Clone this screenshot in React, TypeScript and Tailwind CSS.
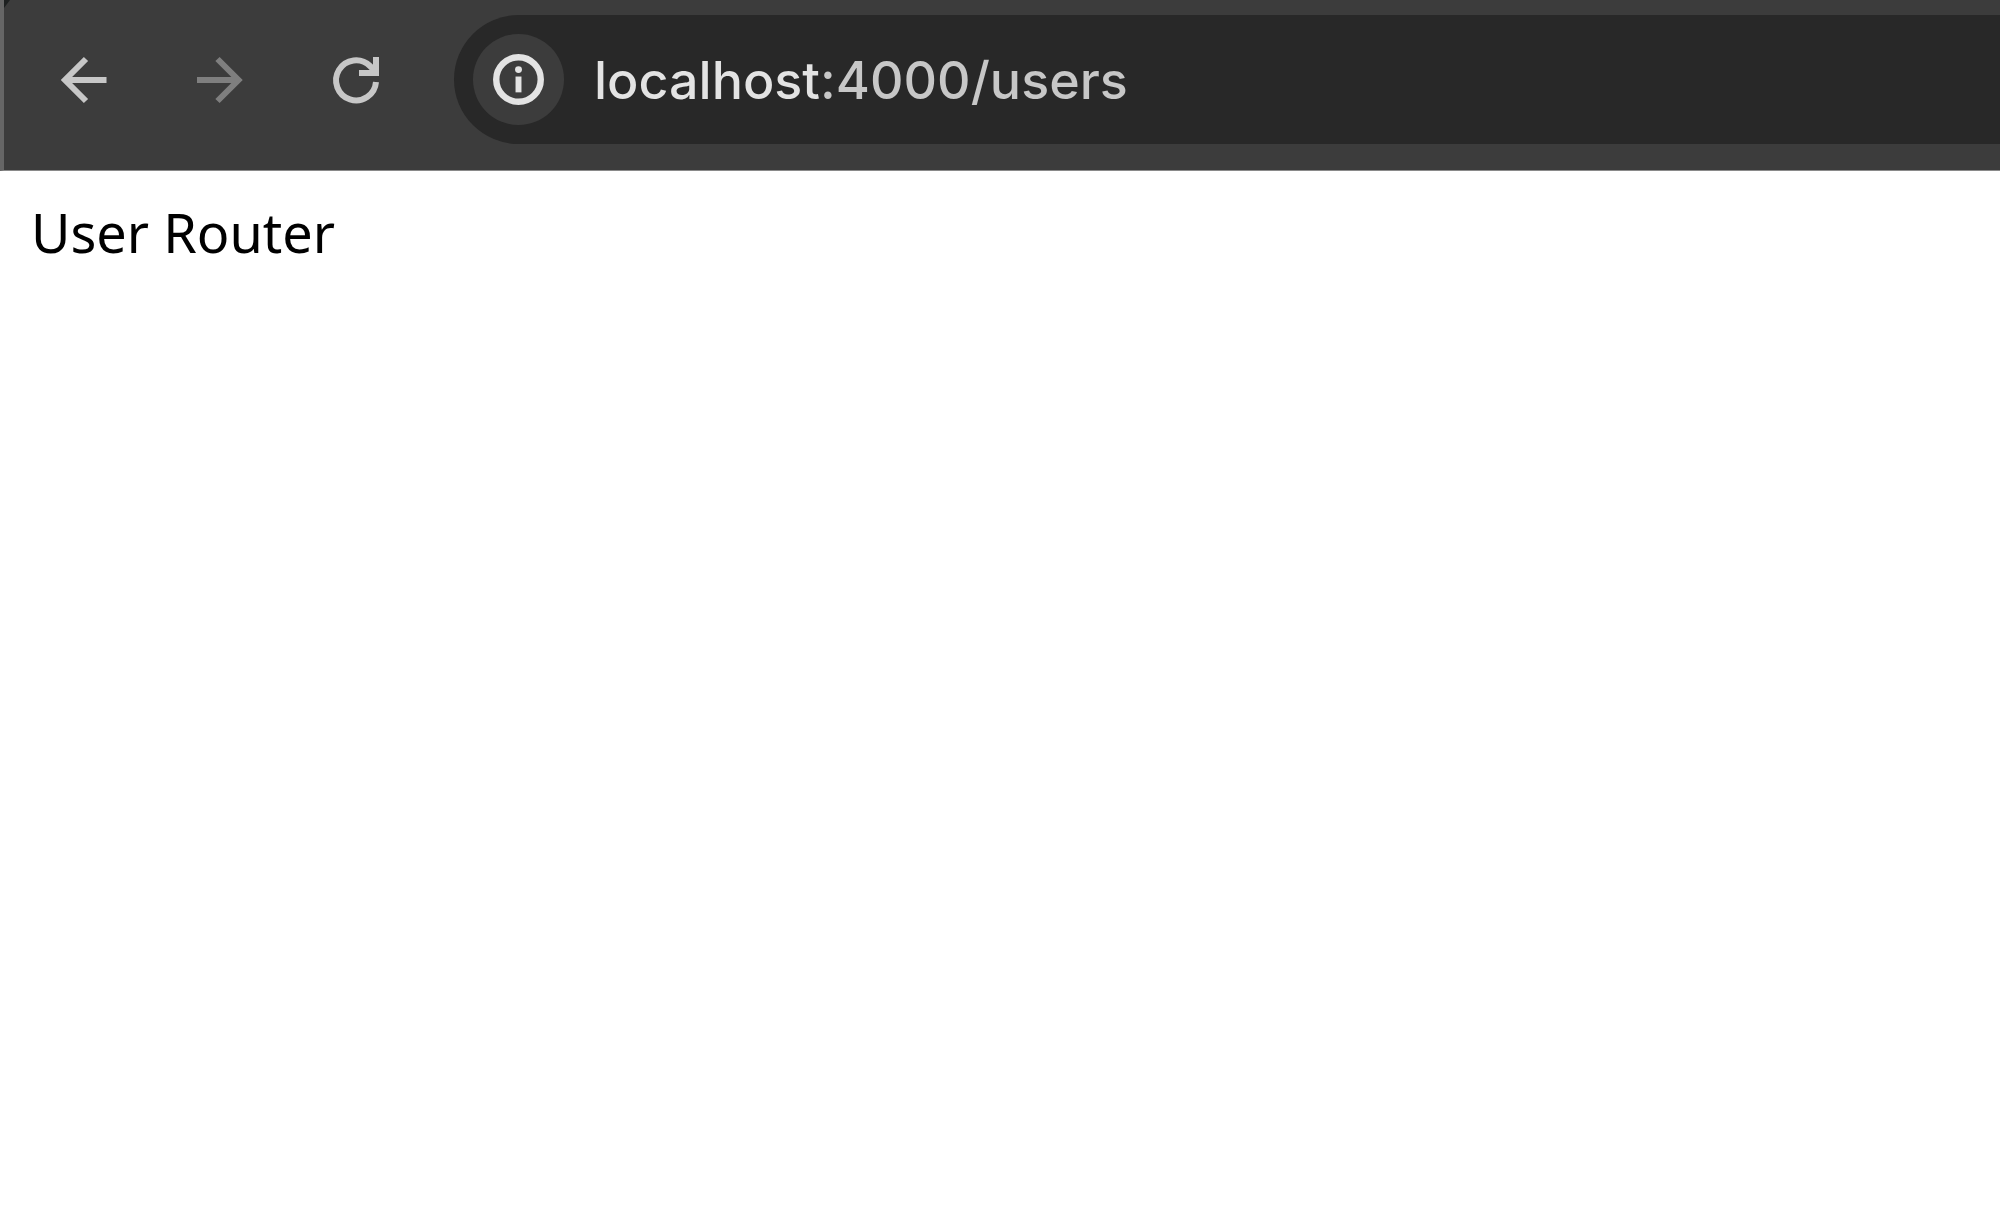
import React from 'react';

const BackIcon = () => (
  <svg viewBox="0 0 92 92" className="size-full" fill="none" stroke="currentColor" strokeWidth="6" aria-hidden="true">
    <path d="M27 46H68.500" />
    <path d="M48 25L27 46L48 67" />
  </svg>
);

const ForwardIcon = () => (
  <svg viewBox="0 0 92 92" className="size-full" fill="none" stroke="currentColor" strokeWidth="6" aria-hidden="true">
    <path d="M23 46H64" />
    <path d="M43.500 25L64.500 46L43.500 67" />
  </svg>
);

const ReloadIcon = () => (
  <svg viewBox="0 0 92 92" className="size-full" fill="none" stroke="currentColor" strokeWidth="6" aria-hidden="true">
    <path d="M66 48A20 20 0 1 1 60 32L66 38" />
    <path d="M66 23V39H49" />
  </svg>
);

const InfoIcon = () => (
  <svg viewBox="0 0 92 92" className="size-full" fill="none" stroke="currentColor" aria-hidden="true">
    <circle cx="46" cy="46" r="22.5" strokeWidth="6.5" />
    <path d="M46 43V59" strokeWidth="6" />
    <circle cx="46" cy="36" r="3.5" fill="currentColor" stroke="none" />
  </svg>
);

const Toolbar = () => {
  return (
    <header className="relative flex items-center border-b border-l-4 border-b-[#8a8a8a] border-l-[#666666] bg-[#3c3c3c] pt-[15px] pb-[26px] pl-[34px]">
      {/* Window corner */}
      <div className="absolute top-0 left-0 size-2 bg-[#1d2020] [clip-path:polygon(0_0,75%_0,0_100%)]" />
      <nav className="mr-[52px] flex gap-11">
        <button type="button" aria-label="Back" className="size-[92px] text-[#c7c7c7]">
          <BackIcon />
        </button>
        <button type="button" aria-label="Forward" className="size-[92px] text-[#7f7f7f]">
          <ForwardIcon />
        </button>
        <button type="button" aria-label="Reload" className="size-[92px] text-[#c7c7c7]">
          <ReloadIcon />
        </button>
      </nav>
      <div className="flex h-[129px] flex-1 items-center rounded-l-full bg-[#282828] pl-[19px]">
        <button type="button" aria-label="Site information" className="size-[91px] shrink-0 rounded-full bg-[#3c3c3c] text-[#e3e3e3]">
          <InfoIcon />
        </button>
        {/* Host is brighter than the port and path */}
        <input
          type="text"
          aria-label="Address"
          defaultValue="localhost:4000/users"
          className="ml-[30px] min-w-0 flex-1 bg-linear-to-r from-[#e3e3e3] from-[225px] to-[#c7c7c7] to-[225px] bg-clip-text pt-0.5 font-['Inter',sans-serif] text-[52px] leading-[72px] font-medium text-transparent outline-none"
        />
      </div>
    </header>
  );
};

export default function App() {
  return (
    <div className="min-h-screen bg-white">
      <Toolbar />
      <main className="px-[31px] py-[21px]">
        <p className="font-['Noto_Sans',sans-serif] text-[54px] leading-[80px] text-black">User Router</p>
      </main>
    </div>
  );
}
